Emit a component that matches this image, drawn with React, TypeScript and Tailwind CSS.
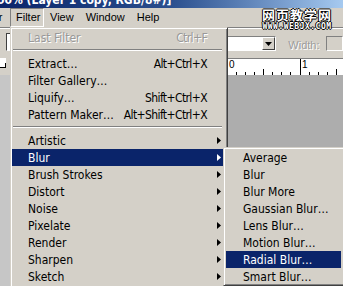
import React from 'react';

type Item =
  | { kind: 'item'; label: string; shortcut?: string; sub?: boolean; disabled?: boolean; active?: boolean }
  | { kind: 'sep' };

const filterItems: Item[] = [
  { kind: 'item', label: 'Last Filter', shortcut: 'Ctrl+F', disabled: true },
  { kind: 'sep' },
  { kind: 'item', label: 'Extract…', shortcut: 'Alt+Ctrl+X' },
  { kind: 'item', label: 'Filter Gallery…' },
  { kind: 'item', label: 'Liquify…', shortcut: 'Shift+Ctrl+X' },
  { kind: 'item', label: 'Pattern Maker…', shortcut: 'Alt+Shift+Ctrl+X' },
  { kind: 'sep' },
  { kind: 'item', label: 'Artistic', sub: true },
  { kind: 'item', label: 'Blur', sub: true, active: true },
  { kind: 'item', label: 'Brush Strokes', sub: true },
  { kind: 'item', label: 'Distort', sub: true },
  { kind: 'item', label: 'Noise', sub: true },
  { kind: 'item', label: 'Pixelate', sub: true },
  { kind: 'item', label: 'Render', sub: true },
  { kind: 'item', label: 'Sharpen', sub: true },
  { kind: 'item', label: 'Sketch', sub: true },
  { kind: 'item', label: 'Stylize', sub: true },
  { kind: 'item', label: 'Texture', sub: true },
];

const blurItems = [
  'Average',
  'Blur',
  'Blur More',
  'Gaussian Blur…',
  'Lens Blur…',
  'Motion Blur…',
  'Radial Blur…',
  'Smart Blur…',
];

const Arrow = ({ white }: { white?: boolean }) => (
  <svg width="4" height="7" viewBox="0 0 4 7" className="block">
    <polygon points="0,0 4,3.5 0,7" fill={white ? '#ffffff' : '#000000'} />
  </svg>
);

const menuFrame =
  'border border-t-[#d4d0c8] border-l-[#d4d0c8] border-r-[#404040] border-b-[#404040] shadow-[inset_1px_1px_#ffffff,inset_-1px_-1px_#808080]';

const disabledText = 'text-[#999999] [text-shadow:1px_1px_0_#ffffff]';

const FilterMenu = () => (
  <div className={`absolute left-[10px] top-[27px] w-[218px] bg-[#d4d0c8] pt-[1px] pl-[1px] pr-[4px] ${menuFrame}`}>
    {filterItems.map((it, i) =>
      it.kind === 'sep' ? (
        <div key={i} className="h-[9px] pt-[3px] px-[1px]">
          <div className="h-[2px] border-t border-t-[#808080] border-b border-b-white" />
        </div>
      ) : (
        <div
          key={i}
          className={`h-[17px] flex items-center pl-[16px] ${it.active ? 'bg-[#0a246a] text-white' : 'text-black'}`}
        >
          <span className={`flex-1 whitespace-nowrap ${it.disabled ? disabledText : ''}`}>{it.label}</span>
          {it.shortcut && (
            <span className={`whitespace-nowrap tracking-[-0.6px] ${it.disabled ? disabledText : ''}`}>
              {it.shortcut}
            </span>
          )}
          <span className="w-[16px] h-full flex items-center pl-[10px]">
            {it.sub && <Arrow white={it.active} />}
          </span>
        </div>
      ),
    )}
  </div>
);

const BlurMenu = () => (
  <div className={`absolute left-[223px] top-[147px] w-[126px] bg-[#d4d0c8] pt-[1px] pl-[2px] pr-[7px] ${menuFrame}`}>
    {blurItems.map((label) => (
      <div
        key={label}
        className={`h-[17px] flex items-center pl-[17px] whitespace-nowrap ${
          label === 'Radial Blur…' ? 'bg-[#0a246a] text-white' : 'text-black'
        }`}
      >
        {label}
      </div>
    ))}
  </div>
);

const Ruler = () => {
  const ticks = [0, 1, 2, 3, 4, 5, 6, 7];
  return (
    <div className="flex h-full">
      {[0, 1].map((inch) => (
        <div key={inch} className="relative flex items-end border-l border-black h-full">
          <span className="absolute left-[1px] top-[1px] text-[10px] leading-[10px] font-['Liberation_Sans',sans-serif] [font-stretch:normal]">
            {inch}
          </span>
          {ticks.map((t) => (
            <div
              key={t}
              className={`w-[9px] border-r border-black ${t === 7 ? 'h-0 border-r-0' : t === 3 ? 'h-[6px]' : 'h-[3px]'}`}
            />
          ))}
        </div>
      ))}
    </div>
  );
};

export default function App() {
  return (
    <div className="relative w-[343px] h-[286px] overflow-hidden bg-[#d4d0c8] font-['DejaVu_Sans_Condensed','DejaVu_Sans',sans-serif] [font-stretch:condensed] text-[12px] select-none">
      {/* title bar, mostly cut off */}
      <div className="h-[8px] overflow-hidden bg-gradient-to-r from-[#0a246a] via-[#2b4f8e] to-[#a6caf0]">
        <div className="-mt-[6px] -ml-[3px] whitespace-nowrap text-white font-bold text-[12px] leading-[12px] font-['DejaVu_Sans',sans-serif]">
          00% (Layer 1 copy, RGB/8#)]
        </div>
      </div>

      {/* menu bar */}
      <div className="h-[19px] flex items-center font-['Liberation_Sans',sans-serif] [font-stretch:normal] text-[11px] text-black">
        <span className="-ml-[25px] w-[28px]">Layer</span>
        <span className="ml-[7px] h-[19px] w-[34px] flex items-center pl-[5px] border border-t-[#808080] border-l-[#808080] border-r-white border-b-white">
          Filter
        </span>
        <span className="ml-[6px]">View</span>
        <span className="ml-[12px]">Window</span>
        <span className="ml-[12px]">Help</span>
      </div>

      {/* options bar */}
      <div className="h-[31px] flex items-start border-t border-t-[#808080] shadow-[inset_0_1px_#ffffff]">
        <div className="ml-[6px] mt-[5px] w-[40px] h-[18px] bg-white border border-t-[#404040] border-l-[#404040] border-r-white border-b-white" />
        <div className="ml-[182px] mt-[8px] w-[62px] h-[15px] bg-white border border-t-[#808080] border-l-[#808080] border-r-white border-b-white flex justify-end">
          <div className="w-[13px] h-full bg-[#d4d0c8] border border-t-white border-l-white border-r-[#404040] border-b-[#404040] flex items-center justify-center">
            <svg width="7" height="4" viewBox="0 0 7 4">
              <polygon points="0,0 7,0 3.5,4" fill="#000" />
            </svg>
          </div>
        </div>
        <span className="ml-[12px] mt-[9px] font-['Liberation_Sans',sans-serif] [font-stretch:normal] text-[11px] text-[#9c9c9c] [text-shadow:1px_1px_0_#ffffff]">
          Width:
        </span>
        <div className="ml-[6px] mt-[8px] w-[20px] h-[15px] border border-t-[#808080] border-l-[#808080] border-r-white border-b-white" />
      </div>

      {/* rulers */}
      <div className="h-[17px] flex">
        <div className="w-[10px] h-[10px] bg-white border-b border-black flex items-end">
          <div className="ml-[5px] h-[4px] border-l border-black" />
        </div>
        <div className="ml-[218px] flex-1 bg-white border-t border-[#808080] pl-[3px]">
          <Ruler />
        </div>
      </div>

      {/* canvas area */}
      <div className="flex h-[220px]">
        <div className="w-[10px] bg-[#c6c6c6]" />
        <div className="flex-1 bg-[#adadad]" />
      </div>

      <FilterMenu />
      <BlurMenu />

      {/* watermark */}
      <div className="absolute left-[262px] top-[7px] flex flex-col items-center text-white [font-stretch:normal]">
        <span className="font-['Noto_Sans_CJK_SC',sans-serif] font-bold text-[13px] leading-[15px] tracking-[1px] [text-shadow:1px_0_0_#000,-1px_0_0_#000,0_1px_0_#000,0_-1px_0_#000]">
          网页教学网
        </span>
        <span className="font-['DejaVu_Sans_Mono',monospace] font-bold text-[8px] leading-[9px] tracking-[0.5px] [text-shadow:1px_0_0_#000,-1px_0_0_#000,0_1px_0_#000,0_-1px_0_#000]">
          WWW.WEBJX.COM
        </span>
      </div>
    </div>
  );
}
